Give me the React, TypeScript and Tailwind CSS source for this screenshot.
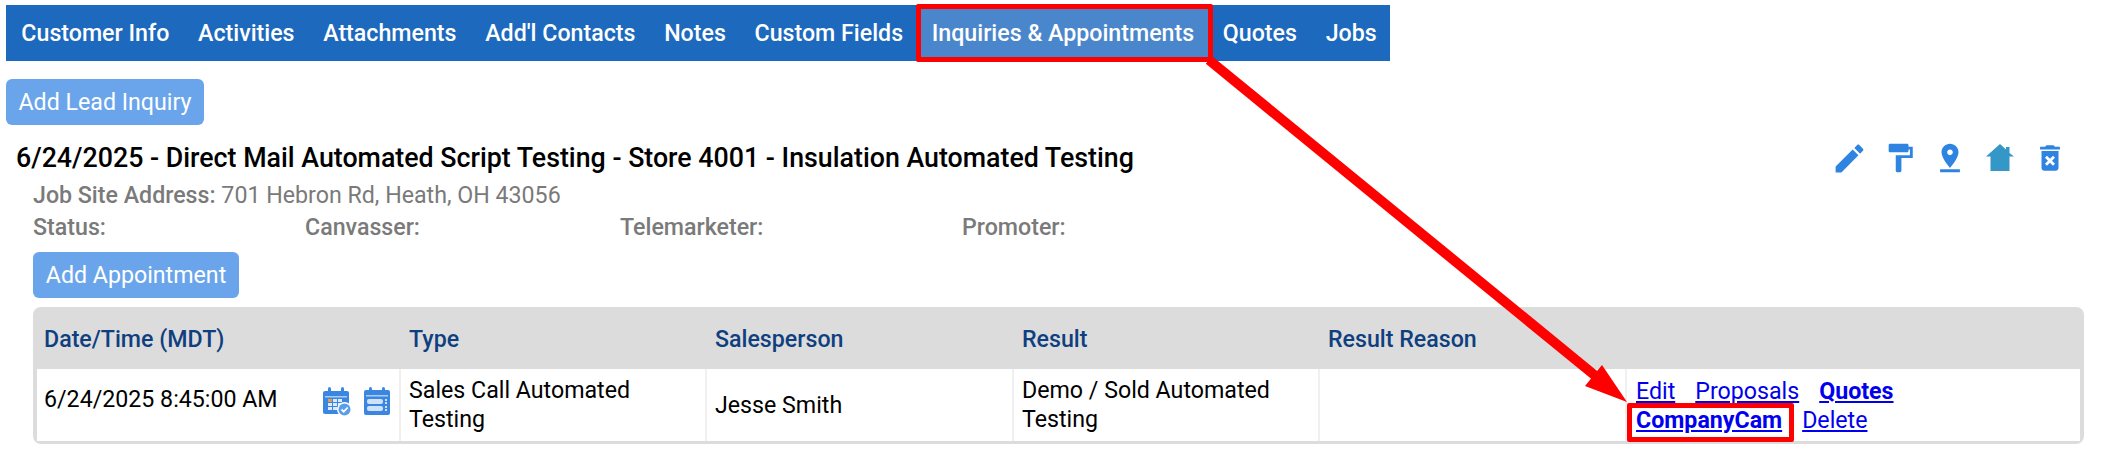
import React from 'react';

const tabs = ['Customer Info', 'Activities', 'Attachments', "Add'l Contacts", 'Notes', 'Custom Fields', 'Inquiries & Appointments', 'Quotes', 'Jobs'];

const Icon = ({ d, className }: { d: string; className: string }) => (
  <svg viewBox="0 0 24 24" className={className} fill="currentColor">
    <path d={d} />
  </svg>
);

const CalendarCheck = () => (
  <svg viewBox="0 0 29 30" className="w-[29px] h-[30px]">
    <path d="M2 4h22a2 2 0 0 1 2 2v19a2 2 0 0 1-2 2H2a2 2 0 0 1-2-2V6a2 2 0 0 1 2-2z" fill="#3b86e0" />
    <rect x="5" y="0" width="3" height="7" rx="1.5" fill="#3b86e0" />
    <rect x="18" y="0" width="3" height="7" rx="1.5" fill="#3b86e0" />
    <rect x="2" y="9" width="22" height="1.5" fill="#a9cdf5" />
    <g fill="#dcebfb">
      <rect x="5" y="12" width="4" height="3" fill="#e59a5c" />
      <rect x="10" y="12" width="4" height="3" />
      <rect x="15" y="12" width="4" height="3" />
      <rect x="5" y="16" width="4" height="3" />
      <rect x="10" y="16" width="4" height="3" />
      <rect x="15" y="16" width="4" height="3" />
      <rect x="5" y="20" width="4" height="3" />
      <rect x="10" y="20" width="4" height="3" />
    </g>
    <circle cx="21.5" cy="22.5" r="7.5" fill="#fff" />
    <circle cx="21.5" cy="22.5" r="6" fill="#5b9de8" />
    <path d="M18.5 22.5l2.2 2.2 4-4.2" fill="none" stroke="#fff" strokeWidth="1.8" />
  </svg>
);

const CalendarList = () => (
  <svg viewBox="0 0 26 28" className="w-[26px] h-[28px]">
    <path d="M2 3h22a2 2 0 0 1 2 2v21a2 2 0 0 1-2 2H2a2 2 0 0 1-2-2V5a2 2 0 0 1 2-2z" fill="#3b86e0" />
    <rect x="5" y="0" width="3" height="6" rx="1.5" fill="#3b86e0" />
    <rect x="18" y="0" width="3" height="6" rx="1.5" fill="#3b86e0" />
    <rect x="2" y="8" width="22" height="1.5" fill="#a9cdf5" />
    <rect x="3" y="12" width="16" height="5" rx="2" fill="#cfe2f8" />
    <rect x="3" y="19" width="16" height="5" rx="2" fill="#cfe2f8" />
    <rect x="21" y="12" width="2" height="2" fill="#cfe2f8" />
    <rect x="21" y="15" width="2" height="2" fill="#cfe2f8" />
    <rect x="21" y="19" width="2" height="2" fill="#cfe2f8" />
    <rect x="21" y="22" width="2" height="2" fill="#cfe2f8" />
  </svg>
);

const App: React.FC = () => {
  return (
    <div className="relative w-[2103px] h-[453px] overflow-hidden bg-white pt-[5px] pl-[6px] font-['Roboto',sans-serif]">
      {/* Tabs */}
      <div className="flex w-[1384px] h-[56px] bg-[#1d69bd] pl-[1px]">
        {tabs.map((t) => (
          <div
            key={t}
            className={`flex shrink-0 items-center whitespace-nowrap px-[14.35px] text-[23.2px] font-medium text-white ${t === 'Inquiries & Appointments' ? 'bg-[#4a86cb]' : ''}`}
          >
            {t}
          </div>
        ))}
      </div>

      <button className="mt-[18px] block h-[46px] w-[198px] rounded-[6px] bg-[#6aa5eb] text-[23.2px] text-white">Add Lead Inquiry</button>

      {/* Title row */}
      <div className="mt-[14px] flex h-[38px] items-center justify-between pl-[10px] pr-[35px]">
        <h2 className="text-[26.77px] font-medium text-black">6/24/2025 - Direct Mail Automated Script Testing - Store 4001 - Insulation Automated Testing</h2>
        <div className="flex items-center gap-[13px] text-[#2f84e2]">
          <Icon className="w-[37px] h-[37px]" d="M3 17.25V21h3.75L17.81 9.94l-3.75-3.75L3 17.25zM20.71 7.04c.39-.39.39-1.02 0-1.41l-2.34-2.34c-.39-.39-1.02-.39-1.41 0l-1.83 1.83 3.75 3.75 1.83-1.83z" />
          <Icon className="w-[34px] h-[34px] mx-[1.5px]" d="M18 4V3c0-.55-.45-1-1-1H5c-.55 0-1 .45-1 1v4c0 .55.45 1 1 1h12c.55 0 1-.45 1-1V6h1v4H9v11c0 .55.45 1 1 1h2c.55 0 1-.45 1-1v-9h8V4h-3z" />
          <Icon className="w-[34px] h-[34px] mx-[1.5px]" d="M18 8c0-3.31-2.69-6-6-6S6 4.69 6 8c0 4.5 6 11 6 11s6-6.5 6-11zm-8 0c0-1.1.9-2 2-2s2 .9 2 2-.89 2-2 2c-1.1 0-2-.9-2-2zM5 20v2h14v-2H5z" />
          <svg viewBox="0 0 28 28" className="mx-[4.5px] h-[28px] w-[28px] fill-[#3596c8]">
            <path d="M14 0L20 5.5V3h3.5V9L28 12.5H23.5V27H4.5V12.5H0Z" />
          </svg>
          <Icon className="w-[34px] h-[34px] mx-[1.5px]" d="M6 19c0 1.1.9 2 2 2h8c1.1 0 2-.9 2-2V7H6v12zm2.46-7.12l1.41-1.41L12 12.59l2.12-2.12 1.41 1.41L13.41 14l2.12 2.12-1.41 1.41L12 15.41l-2.12 2.12-1.41-1.41L10.59 14l-2.13-2.12zM15.5 4l-1-1h-5l-1 1H5v2h14V4z" />
        </div>
      </div>

      {/* Details */}
      <div className="mt-[2px] pl-[27px] text-[23.2px] text-[#7a7a7a]">
        <div className="h-[32px] leading-[32px]"><span className="font-medium">Job Site Address:</span> 701 Hebron Rd, Heath, OH 43056</div>
        <div className="flex h-[32px] leading-[32px] font-medium">
          <div className="w-[272px]">Status:</div>
          <div className="w-[315px]">Canvasser:</div>
          <div className="w-[342px]">Telemarketer:</div>
          <div>Promoter:</div>
        </div>
      </div>

      <button className="mt-[9px] ml-[27px] block h-[46px] w-[206px] rounded-[6px] bg-[#6aa5eb] text-[23.2px] text-white">Add Appointment</button>

      {/* Appointments table */}
      <div className="mt-[9px] ml-[27px] w-[2051px] rounded-[8px] bg-[#dcdcdc] px-[4px] pb-[3px] text-[23.2px]">
        <div className="grid h-[62px] grid-cols-[364px_306px_307px_306px_307px_453px] items-center pt-[3px] font-medium text-[#0f3f7f]">
          <div className="pl-[7px]">Date/Time (MDT)</div>
          <div className="pl-[8px]">Type</div>
          <div className="pl-[8px]">Salesperson</div>
          <div className="pl-[8px]">Result</div>
          <div className="pl-[8px]">Result Reason</div>
          <div />
        </div>
        <div className="grid h-[72px] grid-cols-[364px_306px_307px_306px_307px_453px] bg-white leading-[29px] text-black">
          <div className="flex items-center justify-between border-r-2 border-[#f0f0f0] pl-[7px] pr-[9px]">
            <span className="mb-[12px]">6/24/2025 8:45:00 AM</span>
            <div className="mb-[6px] flex gap-[12px]">
              <CalendarCheck />
              <CalendarList />
            </div>
          </div>
          <div className="flex items-center border-r-2 border-[#f0f0f0] pl-[8px]">Sales Call Automated Testing</div>
          <div className="flex items-center border-r-2 border-[#f0f0f0] pl-[8px]">Jesse Smith</div>
          <div className="flex items-center border-r-2 border-[#f0f0f0] pl-[8px]">Demo / Sold Automated Testing</div>
          <div className="border-r-2 border-[#f0f0f0]" />
          <div className="pl-[9px] pt-[8px] text-[#0000ee] underline">
            <div className="flex gap-[20px]">
              <a>Edit</a>
              <a>Proposals</a>
              <a className="font-bold">Quotes</a>
            </div>
            <div className="flex gap-[20px]">
              <a className="font-bold">CompanyCam</a>
              <a>Delete</a>
            </div>
          </div>
        </div>
      </div>

      {/* Red annotations */}
      <div className="absolute left-[916px] top-[4px] h-[58px] w-[297px] rounded-[2px] border-[5px] border-[#ff0000]" />
      <div className="absolute left-[1627px] top-[403px] h-[39px] w-[167px] rounded-[2px] border-[5px] border-[#ff0000]" />
      <svg className="absolute left-0 top-0 pointer-events-none" width="2103" height="453">
        <line x1="1209" y1="60" x2="1598" y2="378" stroke="#ff0000" strokeWidth="10" />
        <polygon points="1627,402 1602,365 1585,386" fill="#ff0000" />
      </svg>
    </div>
  );
};

export default App;
